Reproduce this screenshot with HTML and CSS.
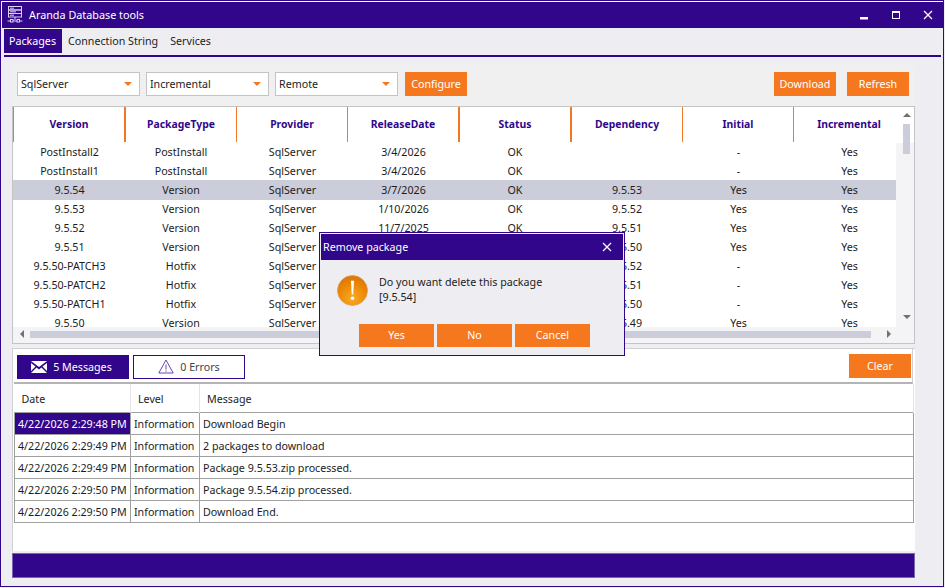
FILE: index.html
```html
<!DOCTYPE html>
<html lang="en">
<head>
    <meta charset="UTF-8">
    <title>Aranda Database tools</title>
    <link rel="stylesheet" href="styles.css">
</head>
<body>

<div class="window">
    <!-- Title bar -->
    <div class="titlebar">
        <svg class="app-icon" width="16" height="18" viewBox="0 0 16 18" fill="none" stroke="#d9d0ee" stroke-width="1">
            <rect x="1.5" y="0.5" width="13" height="3.5"/>
            <rect x="1.5" y="4" width="13" height="3.5"/>
            <rect x="1.5" y="7.5" width="13" height="3.5"/>
            <path d="M3 2.2h4M3 5.8h6M3 9.2h4"/>
            <path d="M8 11v3M0.5 15h3M6 15h4M12.5 15h3"/>
            <rect x="3.5" y="13.5" width="2.5" height="2.5"/>
            <rect x="10" y="13.5" width="2.5" height="2.5"/>
        </svg>
        <span class="app-title">Aranda Database tools</span>
        <div class="win-buttons">
            <svg width="10" height="10" viewBox="0 0 10 10"><rect x="1" y="7" width="8" height="2.5" fill="#fff"/></svg>
            <svg width="10" height="10" viewBox="0 0 10 10" fill="none" stroke="#fff"><rect x="1.5" y="1.5" width="7" height="7"/><path d="M1 2h8" stroke-width="2"/></svg>
            <svg width="10" height="10" viewBox="0 0 10 10" stroke="#fff" stroke-width="1.3"><path d="M1 1l8 8M9 1l-8 8"/></svg>
        </div>
    </div>

    <!-- Tabs -->
    <div class="tabs">
        <a class="tab active">Packages</a>
        <a class="tab">Connection String</a>
        <a class="tab">Services</a>
    </div>

    <div class="toolbar">
        <div class="combo"><span>SqlServer</span><i class="caret"></i></div>
        <div class="combo"><span>Incremental</span><i class="caret"></i></div>
        <div class="combo"><span>Remote</span><i class="caret"></i></div>
        <button class="btn btn-tool">Configure</button>
        <button class="btn btn-tool push">Download</button>
        <button class="btn btn-tool">Refresh</button>
    </div>

    <!-- Packages grid -->
    <div class="grid-box">
        <div class="grid-top">
            <div class="grid-view">
                <table class="packages">
                    <thead>
                        <tr><th>Version</th><th>PackageType</th><th>Provider</th><th>ReleaseDate</th><th>Status</th><th>Dependency</th><th>Initial</th><th>Incremental</th></tr>
                    </thead>
                    <tbody>
                        <tr><td>PostInstall2</td><td>PostInstall</td><td>SqlServer</td><td>3/4/2026</td><td>OK</td><td></td><td>-</td><td>Yes</td></tr>
                        <tr><td>PostInstall1</td><td>PostInstall</td><td>SqlServer</td><td>3/4/2026</td><td>OK</td><td></td><td>-</td><td>Yes</td></tr>
                        <tr class="selected"><td>9.5.54</td><td>Version</td><td>SqlServer</td><td>3/7/2026</td><td>OK</td><td>9.5.53</td><td>Yes</td><td>Yes</td></tr>
                        <tr><td>9.5.53</td><td>Version</td><td>SqlServer</td><td>1/10/2026</td><td>OK</td><td>9.5.52</td><td>Yes</td><td>Yes</td></tr>
                        <tr><td>9.5.52</td><td>Version</td><td>SqlServer</td><td>11/7/2025</td><td>OK</td><td>9.5.51</td><td>Yes</td><td>Yes</td></tr>
                        <tr><td>9.5.51</td><td>Version</td><td>SqlServer</td><td>10/3/2025</td><td>OK</td><td>9.5.50</td><td>Yes</td><td>Yes</td></tr>
                        <tr><td>9.5.50-PATCH3</td><td>Hotfix</td><td>SqlServer</td><td>9/12/2025</td><td>OK</td><td>9.5.52</td><td>-</td><td>Yes</td></tr>
                        <tr><td>9.5.50-PATCH2</td><td>Hotfix</td><td>SqlServer</td><td>9/5/2025</td><td>OK</td><td>9.5.51</td><td>-</td><td>Yes</td></tr>
                        <tr><td>9.5.50-PATCH1</td><td>Hotfix</td><td>SqlServer</td><td>8/29/2025</td><td>OK</td><td>9.5.50</td><td>-</td><td>Yes</td></tr>
                        <tr><td>9.5.50</td><td>Version</td><td>SqlServer</td><td>8/1/2025</td><td>OK</td><td>9.5.49</td><td>Yes</td><td>Yes</td></tr>
                    </tbody>
                </table>
            </div>
            <div class="vscroll">
                <i class="arrow-up"></i>
                <div class="vthumb"></div>
                <i class="arrow-down"></i>
            </div>
        </div>
        <div class="hscroll">
            <i class="arrow-left"></i>
            <div class="hthumb"></div>
            <i class="arrow-right"></i>
        </div>
    </div>

    <!-- Messages -->
    <div class="log-panel">
        <div class="log-bar">
            <button class="log-btn on">
                <svg width="16" height="12" viewBox="0 0 16 12"><path d="M0 0h16L8 6z M0 2l4.5 3.6L0 10z M16 2l-4.5 3.6L16 10z M0 12l5.5-5.5L8 8.4l2.5-1.9L16 12z" fill="#fff"/></svg>
                5 Messages
            </button>
            <button class="log-btn">
                <svg width="16" height="15" viewBox="0 0 16 15" fill="none" stroke="#6a45b0"><path d="M8 1L0.8 14h14.4z"/><path d="M8 5.5v5M8 11.5v1.2"/></svg>
                0 Errors
            </button>
            <button class="btn btn-clear">Clear</button>
        </div>
        <table class="log">
            <thead>
                <tr><th>Date</th><th>Level</th><th>Message</th></tr>
            </thead>
            <tbody>
                <tr><td class="current">4/22/2026 2:29:48 PM</td><td>Information</td><td>Download Begin</td></tr>
                <tr><td>4/22/2026 2:29:49 PM</td><td>Information</td><td>2 packages to download</td></tr>
                <tr><td>4/22/2026 2:29:49 PM</td><td>Information</td><td>Package 9.5.53.zip processed.</td></tr>
                <tr><td>4/22/2026 2:29:50 PM</td><td>Information</td><td>Package 9.5.54.zip processed.</td></tr>
                <tr><td>4/22/2026 2:29:50 PM</td><td>Information</td><td>Download End.</td></tr>
            </tbody>
        </table>
    </div>

    <div class="statusbar"></div>

    <!-- Remove dialog -->
    <div class="dialog">
        <div class="dialog-title">
            <span>Remove package</span>
            <svg width="10" height="10" viewBox="0 0 10 10" stroke="#fff" stroke-width="1.3"><path d="M1 1l8 8M9 1l-8 8"/></svg>
        </div>
        <div class="dialog-body">
            <svg class="warn-icon" width="31" height="31" viewBox="0 0 32 32">
                <defs>
                    <radialGradient id="warn" cx="50%" cy="75%" r="70%">
                        <stop offset="0" stop-color="#fbaa1e"/>
                        <stop offset="0.7" stop-color="#ea8505"/>
                        <stop offset="1" stop-color="#d9790c"/>
                    </radialGradient>
                </defs>
                <circle cx="16" cy="16" r="15.5" fill="url(#warn)" stroke="#e0a060" stroke-width="0.8"/>
                <path d="M14.4 6h3.2l-0.8 14h-1.6z" fill="#fff"/>
                <circle cx="16" cy="24" r="1.8" fill="#fff"/>
            </svg>
            <p>Do you want delete this package<br>[9.5.54]</p>
        </div>
        <div class="dialog-buttons">
            <button class="btn btn-dialog">Yes</button>
            <button class="btn btn-dialog">No</button>
            <button class="btn btn-dialog">Cancel</button>
        </div>
    </div>
</div>

</body>
</html>
```

FILE: styles.css
```css
* {
    margin: 0;
    padding: 0;
    box-sizing: border-box;
}

body {
    width: 945px;
    height: 588px;
    background: #eeeef2;
    font-family: "Noto Sans", sans-serif;
    font-size: 10.7px;
    color: #1c1c1c;
    overflow: hidden;
}

.window {
    position: relative;
    width: 944px;
    height: 587px;
    border: 1px solid #32068b;
    background: #eeeef2;
    display: flex;
    flex-direction: column;
}

/* Title bar */
.titlebar {
    height: 26px;
    margin-top: 1px;
    margin-left: 1px;
    padding-left: 5px;
    padding-bottom: 1px;
    background: #32068b;
    color: #fff;
    display: flex;
    align-items: center;
    box-shadow: 0 -1px 0 #fff;
}

.app-icon {
    margin-right: 6px;
}

.app-title {
    font-size: 10.8px;
}

.win-buttons {
    margin-left: auto;
    margin-right: 10px;
    display: flex;
    gap: 22px;
}

/* Tabs */
.tabs {
    margin: 1px 2px 0 3px;
    height: 28px;
    border-bottom: 2px solid #32068b;
    display: flex;
}

.tab {
    height: 24px;
    padding: 0 6px;
    display: flex;
    align-items: center;
}

.tab.active {
    width: 58px;
    background: #32068b;
    color: #fff;
    padding: 0 5px;
}

/* Toolbar */
.toolbar {
    margin: 8px 28px 0 11px;
    padding: 7px 6px 10px 5px;
    background: #f0f0f1;
    display: flex;
}

.combo {
    width: 123px;
    height: 24px;
    margin-right: 6px;
    padding: 0 0 0 3px;
    background: #fff;
    border: 1px solid #c4c4c4;
    display: flex;
    align-items: center;
    justify-content: space-between;
}

.caret {
    width: 0;
    height: 0;
    margin-right: 7px;
    border-left: 4px solid transparent;
    border-right: 4px solid transparent;
    border-top: 4px solid #f5781e;
}

.btn {
    border: 0;
    background: #f5781e;
    color: #fff;
    font-family: inherit;
    font-size: 10.7px;
}

.btn-tool {
    width: 62px;
    height: 24px;
    margin-left: 1px;
}

.btn-tool.push {
    margin-left: auto;
    margin-right: 10px;
}

/* Packages grid */
.grid-box {
    margin: 0 28px 0 11px;
    height: 238px;
    border: 1px solid #c4c4c4;
    background: #fff;
}

.grid-top {
    height: 220px;
    display: flex;
}

.grid-view {
    width: 883px;
    height: 220px;
    overflow: hidden;
}

.packages {
    width: 891px;
    table-layout: fixed;
    border-collapse: separate;
    border-spacing: 0;
}

.packages th {
    height: 35px;
    width: 111px;
    padding-bottom: 2px;
    color: #32068b;
    font-weight: 700;
    font-size: 10.4px;
    border-left: 1px solid #f5781e;
}

.packages th:nth-child(2),
.packages th:nth-child(5),
.packages th:nth-child(6) {
    width: 112px;
    border-left-width: 2px;
}

.packages td {
    height: 19px;
    padding-left: 2px;
    text-align: center;
    white-space: nowrap;
}

.packages .selected td {
    background: #cccdda;
    box-shadow: 0 1px 0 #cccdda;
}

.vscroll {
    position: relative;
    flex: 1;
    background: linear-gradient(to bottom, #fff 36px, #f4f4f6 36px);
}

.vthumb {
    position: absolute;
    top: 17px;
    left: 7px;
    width: 7px;
    height: 30px;
    background: #cccdda;
}

.arrow-up, .arrow-down {
    position: absolute;
    left: 7px;
    width: 0;
    height: 0;
    border-left: 4px solid transparent;
    border-right: 4px solid transparent;
}

.arrow-up {
    top: 6px;
    border-bottom: 4px solid #707070;
}

.arrow-down {
    bottom: 8px;
    border-top: 4px solid #707070;
}

.hscroll {
    height: 16px;
    padding: 0 0 2px 7px;
    background: #f4f4f6;
    display: flex;
    align-items: center;
}

.hthumb {
    width: 841px;
    height: 7px;
    margin-left: 6px;
    background: #cccdda;
}

.arrow-left, .arrow-right {
    width: 0;
    height: 0;
    border-top: 4px solid transparent;
    border-bottom: 4px solid transparent;
}

.arrow-left {
    border-right: 4px solid #707070;
}

.arrow-right {
    margin-left: 16px;
    border-left: 4px solid #707070;
}

/* Messages */
.log-panel {
    margin: 4px 28px 0 11px;
    height: 203px;
    padding-left: 1px;
    background: #fff;
    border-top: 1px solid #d0d0d0;
    border-left: 1px solid #d0d0d0;
}

.log-bar {
    height: 35px;
    margin-right: 2px;
    padding: 6px 1px 0 3px;
    display: flex;
    border-right: 1px solid #d0d0d0;
    border-bottom: 2px solid #b4b4b4;
}

.log-btn {
    width: 112px;
    height: 24px;
    margin-right: 4px;
    padding-bottom: 1px;
    border: 1px solid #32068b;
    background: #fff;
    color: #444;
    font-family: inherit;
    font-size: 10.7px;
    display: flex;
    align-items: center;
    justify-content: center;
    gap: 6px;
}

.log-btn.on {
    padding-right: 3px;
    background: #32068b;
    color: #fff;
}

.btn-clear {
    width: 62px;
    height: 24px;
    margin-left: auto;
    margin-top: -1px;
}

.log {
    width: 900px;
    table-layout: fixed;
    border-collapse: collapse;
}

.log th {
    height: 28px;
    padding: 2px 0 0 7px;
    font-weight: 400;
    text-align: left;
    border-right: 1px solid #e4e4e4;
}

.log th:nth-child(1) { width: 116px; }
.log th:nth-child(2) { width: 69px; }

.log td {
    height: 22px;
    padding: 1px 0 0 3px;
    border: 1px solid #a0a0a0;
    white-space: nowrap;
}

.log td.current {
    background: #32068b;
    color: #fff;
}

.statusbar {
    margin: 2px 28px 0 11px;
    height: 25px;
    background: #32068b;
    border: 1px solid #7a64ad;
}

/* Remove dialog */
.dialog {
    position: absolute;
    top: 231px;
    left: 318px;
    width: 306px;
    height: 124px;
    padding: 1px;
    background: #eeeef2;
    border: 1px solid #32068b;
}

.dialog-title {
    height: 26px;
    padding: 0 11px 0 2px;
    background: #32068b;
    color: #fff;
    display: flex;
    align-items: center;
    justify-content: space-between;
}

.dialog-body {
    display: flex;
    height: 64px;
    padding: 15px 0 0 16px;
}

.warn-icon {
    margin-right: 11px;
}

.dialog-body p {
    line-height: 15px;
}

.dialog-buttons {
    display: flex;
    gap: 3px;
    padding-left: 38px;
}

.btn-dialog {
    width: 75px;
    height: 23px;
    padding-bottom: 1px;
}
```
